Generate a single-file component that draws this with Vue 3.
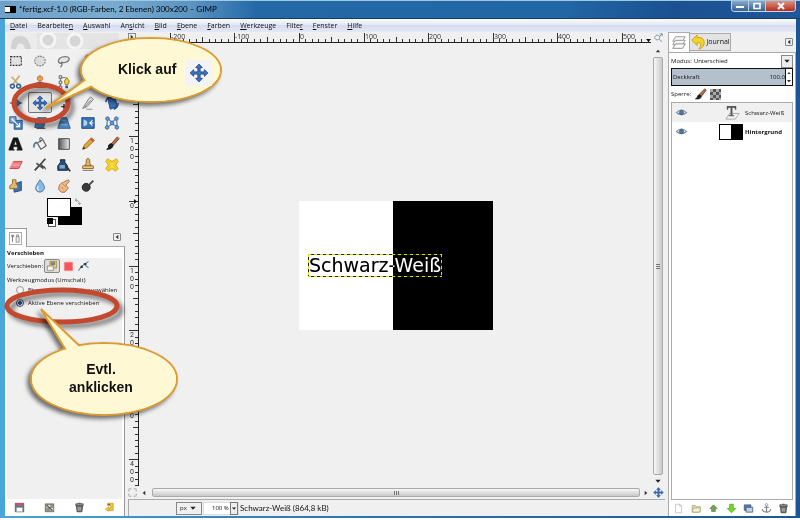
<script setup>
import { ref } from 'vue'

const menu = [
  ['', 'D', 'atei'], ['Bearbeite', 'n', ''], ['', 'A', 'uswahl'], ['An', 's', 'icht'],
  ['', 'B', 'ild'], ['', 'E', 'bene'], ['', 'F', 'arben'], ['', 'W', 'erkzeuge'],
  ['Filte', 'r', ''], ['', 'F', 'enster'], ['', 'H', 'ilfe'],
]

// Each shape is [path, fill, stroke, stroke width, dash]
const MOVE = 'M8 0L11 3.2H9V7H12.8V5L16 8L12.8 11V9H9V12.8H11L8 16L5 12.8H7V9H3.2V11L0 8L3.2 5V7H7V3.2H5Z'
const EYE = 'M1 8Q8 1 15 8Q8 14 1 8Z'
const icons = {
  rect: [['M2 3H14V13H2Z', '#e2e2e2', '#333', 1.3, '2 1.3']],
  ellipse: [['M8 2.5A6 5.5 0 1 1 7.9 2.5Z', '#dcdcdc', '#777', 1.2, '2 1.3']],
  lasso: [['M5 11C0 10 1 5 6 3.5C11 2 15 4 13.5 7C12 10 7 10.5 5 9Q7 12 4 15', '#e4e4e4', '#777', 1.4]],
  scissors: [['M5 10L12 1M10 10L3 2', 'none', '#caa76a', 1.8], ['M4 10.5A2.2 2.2 0 1 1 3.9 10.5ZM11 10.5A2.2 2.2 0 1 1 10.9 10.5Z', 'none', '#2c5f9e', 1.8]],
  foreground: [['M8 1A3 3 0 1 1 7.9 1Z', '#f0a04a', '#b8672a', 1], ['M2 14Q2 8 8 8Q14 8 14 14Z', '#e88a35', '#9b5220', 1], ['M5 8L8 12L11 8Z', '#3f72ad', 'none', 0]],
  paths: [['M4 2V14M4 3H10', 'none', '#777', 1], ['M2.5 1H5.5V4H2.5ZM2.5 7H5.5V10H2.5ZM2.5 12.5H5.5V15.5H2.5Z', '#eee', '#555', 1], ['M11 3L14 7L12.5 11H9.5L8.5 7Z', '#f4cf3d', '#94750f', 1], ['M9.5 12H12.5V15H9.5Z', '#2b5796', 'none', 0]],
  picker: [['M2 14L4 9L10 3L13 6L7 12Z', '#9fbcdb', '#3c6288', 1.2], ['M9 2L14 7', 'none', '#222', 3]],
  align: [['M8 3L13 8L8 13L3 8Z', '#4c7fb8', '#2a5286', 1], ['M1 8H4M12 8H15M8 1V4M8 12V15', 'none', '#2a5286', 1.4]],
  cross: [['M8 9V15M5 12H11', 'none', '#222', 1.5]],
  move: [[MOVE, '#3e73bd', '#1d478c', 0.8]],
  zoom: [['M7 1A5 5 0 1 1 6.9 1Z', '#dbe7f1', '#999', 1.4], ['M11 10L15 14', 'none', '#444', 2.4]],
  crop: [['M2 14L9 3L11 1L14 4L7 12Z', '#d9d9d9', '#777', 1], ['M3 14L11 5M6 15H13', 'none', '#888', 1]],
  rotate: [['M3 2L12 4L14 12L6 15Z', '#3a70b6', '#1b4279', 1], ['M1 7Q2 1 8 2M15 8Q15 13 10 15', 'none', '#22497e', 1.6]],
  scale: [['M6 5H15V15H6Z', '#4e86c2', '#204f89', 1], ['M1 1H8V8H1Z', '#87afd8', '#204f89', 1], ['M3 3L12 12M12 8V12H8', 'none', '#fff', 1.3]],
  shear: [['M5 2H15L12 13H2Z', '#4d84bf', '#285a93', 1], ['M4 14H14', 'none', '#555', 1.5]],
  perspective: [['M5 2H11L15 14H1Z', '#4f86c0', '#285a93', 1], ['M4 10H12M6 5H10', 'none', '#a5c3df', 1]],
  flip: [['M1 2H15V14H1Z', '#3975b7', '#174780', 1], ['M3 4L7 6V10L3 12Z', '#b6d4ee', 'none', 0], ['M13 5L10 8L13 11M10 8H14', 'none', '#fff', 1.2]],
  cage: [['M3 3L8 7L13 3L14 12L8 9L2 13Z', 'none', '#5682ae', 1.4], ['M3 1A2 2 0 1 1 2.9 1ZM13 1A2 2 0 1 1 12.9 1ZM8 6A2 2 0 1 1 7.9 6ZM2.5 11A2 2 0 1 1 2.4 11ZM13.5 11A2 2 0 1 1 13.4 11Z', '#6e9fce', '#2b5c94', 1]],
  text: [['M0 14L5 1H10L15 14V15H9V14H10L9.3 11H5.3L4.7 14H6V15H0ZM6 9H9L7.5 4Z', '#161616', '#161616', 0.5]],
  bucket: [['M5 7L11 3L15 10L9 14Z', '#f0f0f0', '#555', 1.2], ['M11 3Q10 0 8 1Q7 3 9 6', 'none', '#555', 1.1], ['M6 7Q1 5 1 12', 'none', '#54789b', 2]],
  gradient: [['M2 2H14V14H2Z', 'url(#toolGradient)', '#444', 1]],
  pencil: [['M2 14L4 9L12 1L15 4L7 12Z', '#e2a63a', '#9b5d15', 1], ['M2 14L3 11L5 13Z', '#222', 'none', 0], ['M11 2L14 5', 'none', '#d54d3d', 2]],
  brush: [['M7 8L14 0L16 2L9 10Z', '#bd7448', '#61351f', 1], ['M2 14Q5 13 4 10Q6 6 9 9Q9 14 2 14Z', '#222', '#111', 1]],
  eraser: [['M5 4H15L11 12H1Z', '#f47b80', '#b63f47', 1], ['M1 12L5 4M3 8H13', 'none', '#f9b5b8', 1]],
  airbrush: [['M2 14L8 8L14 1', 'none', '#444', 2], ['M4 6L12 12M8 7L11 9', 'none', '#555', 2], ['M10 10Q14 9 14 13', 'none', '#333', 1.2]],
  ink: [['M4 2H9V5L12 9V14H1V9L4 5Z', '#284d76', '#14283d', 1], ['M3 8H9V12H3Z', '#7ba8d2', 'none', 0], ['M10 9L15 15', 'none', '#333', 2]],
  clone: [['M6 2Q8 -1 10 2V6L12 9H4L6 6Z', '#ddb569', '#8d6628', 1], ['M2 9H14V12H2Z', '#e9ca83', '#8d6628', 1], ['M2 14H14', 'none', '#666', 1]],
  heal: [['M3 1L8 4L13 1L15 4L12 8L15 12L12 15L8 12L4 15L1 12L4 8L1 4Z', '#f3cf25', '#d4a70d', 1], ['M6 7H10M6 10H10', 'none', '#fff08b', 1]],
  perspectiveClone: [['M5 6L14 3V13L6 15Z', '#3b74b5', '#1d4a82', 1], ['M4 1H8V5L10 8V11H1V8L4 5Z', '#dfb86e', '#8e682d', 1]],
  blur: [['M8 1Q14 8 13 11Q11 15 8 15Q4 15 3 11Q3 8 8 1Z', '#8bb8e0', '#4377a6', 1], ['M6 8Q4 12 7 13', 'none', '#e1f2ff', 1.5]],
  smudge: [['M2 12Q2 5 7 4L13 1L14 3L10 7L13 10L9 15H5Z', '#f0bb8b', '#ad6a3f', 1], ['M7 6L10 9M5 9L8 12', 'none', '#c47c4c', 1]],
  dodge: [['M6 5A4.5 4.5 0 1 1 5.9 5Z', '#3a3a3a', '#222', 1], ['M9 7L14 2', 'none', '#444', 2]],
  save: [['M1 1H15V15H1Z', '#53779f', '#375272', 1], ['M3 1H13V5H3Z', '#dd5151', 'none', 0], ['M3 8H13V15H3Z', '#fff', '#999', 1]],
  restore: [['M1 2H15V15H1Z', '#9a937f', '#57584b', 1], ['M3 4H9V8H3ZM9 9H14V13H9Z', '#e6ebcf', 'none', 0], ['M3 4L13 13', 'none', '#495b75', 2]],
  trash: [['M3 5H13L12 15H4Z', '#777', '#333', 1.2], ['M2 2H14V5H2ZM6 1H10', '#aaa', '#333', 1.2], ['M6 7V13M9 7V13', 'none', '#ddd', 1]],
  reset: [['M5 1H14V13H5V9H10V5H5Z', '#f3c832', '#c88d11', 1], ['M7 7V14L1 11Z', '#f7d94a', '#c88d11', 1], ['M5 3H9', 'none', '#3b6ca6', 2]],
  tabTool: [['M3 2V14M2 2V5H5V2', 'none', '#777', 1.5], ['M9 5H14V14H9ZM10 5V2H13V5', '#eee', '#777', 1.2]],
  layerMove: [['M5 1H15V11H5Z', '#f2cd71', '#9b7330', 1], ['M1 8H10V15H1Z', '#f4f4f4', '#7f7155', 1], ['M7 3H12V6H7Z', '#7797b8', '#49607a', 1]],
  selection: [['M1 1H15V15H1Z', '#f45659', '#ff9999', 1]],
  pathMove: [['M1 14L5 8L15 1M8 4L15 10', 'none', '#567b9f', 1.4], ['M4 7H7V10H4ZM9 3H12V6H9Z', '#333', 'none', 0]],
  layers: [['M4 1H15L12 6H1Z', '#f7f7f7', '#888', 0.9], ['M4 5H15L12 10H1Z', '#f7f7f7', '#888', 0.9], ['M4 9H15L12 14H1Z', '#fafafa', '#777', 0.9]],
  journal: [['M1 6L7 0V3Q15 2 15 9Q15 14 9 16Q12 12 11 10Q10 8 7 9V12Z', '#f5d327', '#c99d12', 1]],
  lockBrush: [['M6 8L14 0L16 2L9 11Z', '#b66d48', '#51372b', 1], ['M1 14Q4 13 4 10Q7 6 9 11Q8 15 1 14Z', '#222', '#111', 1]],
  eye: [[EYE, '#fff', '#6d859a', 1.4], ['M8 5A3 3 0 1 1 7.9 5Z', '#53779a', '#34516e', 1]],
  textLayer: [['M6 9H16L12 15H2Z', '#f5f5f5', '#999', 0.8], ['M3 1H13V5H12L11 3H9V11H11V12H5V11H7V3H5L4 5H3Z', '#555', 'none', 0]],
  newLayer: [['M3 1H10L13 4V15H3Z', '#fff', '#aaa', 1], ['M10 1V4H13', '#ddd', '#aaa', 1]],
  folder: [['M1 3H6L8 5H14V14H1Z', '#ded9ae', '#9e9968', 1], ['M3 7H15L13 14H1Z', '#f2efd2', '#9e9968', 1]],
  up: [['M8 2L14 8H11V13H5V8H2Z', '#7aa05c', '#4c6f43', 1]],
  down: [['M8 15L15 8H11V1H5V8H1Z', '#72d927', '#3c9d15', 1]],
  duplicate: [['M1 2H12V11H1Z', '#5b7eaa', '#304d73', 1], ['M4 6H15V14H4Z', '#c0d0df', '#2e5077', 1.2]],
  anchor: [['M8 4V14M4 6H12M1 9Q2 14 8 14Q14 14 15 9', 'none', '#747d84', 1.8], ['M8 0A2 2 0 1 1 7.9 0Z', '#fff', '#747d84', 1.3]],
  swap: [['M3 3Q12 3 12 12M3 3L7 0M3 3L7 6M12 12L9 9M12 12L15 9', 'none', '#888', 1.5]],
  focus: [['M2 6V2H6M10 2H14V6M14 10V14H10M6 14H2V10', 'none', '#777', 1.3, '2 1']],
  zoomFit: [['M6 4A4 4 0 1 1 5.9 4ZM9 11L14 15M10 2H14V6M14 2L9 7', 'none', '#7a8792', 1.4]],
  left: [['M11 3V13L5 8Z', '#333', 'none', 0]],
  right: [['M5 3V13L11 8Z', '#333', 'none', 0]],
  arrowUp: [['M3 11H13L8 5Z', '#333', 'none', 0]],
  arrowDown: [['M2 5H14L8 12Z', '#222', 'none', 0]],
}

const tools = [
  ['rect', 'Rechteckige Auswahl'], ['ellipse', 'Elliptische Auswahl'], ['lasso', 'Freie Auswahl'], ['foreground', 'Zauberstab'], ['picker', 'Nach Farbe'],
  ['scissors', 'Magnetische Schere'], ['foreground', 'Vordergrundauswahl'], ['paths', 'Pfade'], ['picker', 'Farbpipette'], ['zoom', 'Vergrößerung'],
  ['align', 'Ausrichten'], ['move', 'Verschieben'], ['cross', 'Maßband'], ['crop', 'Zuschneiden'], ['rotate', 'Drehen'],
  ['scale', 'Skalieren'], ['shear', 'Scheren'], ['perspective', 'Perspektive'], ['flip', 'Spiegeln'], ['cage', 'Käfig'],
  ['text', 'Text'], ['bucket', 'Füllen'], ['gradient', 'Farbverlauf'], ['pencil', 'Stift'], ['brush', 'Pinsel'],
  ['eraser', 'Radierer'], ['airbrush', 'Sprühpistole'], ['ink', 'Tinte'], ['clone', 'Klonen'], ['heal', 'Heilen'],
  ['perspectiveClone', 'Perspektivisches Klonen'], ['blur', 'Weichzeichnen'], ['smudge', 'Verschmieren'], ['dodge', 'Abwedeln'],
]
const optionActions = [['save', 'Speichern'], ['restore', 'Wiederherstellen'], ['trash', 'Löschen'], ['reset', 'Zurücksetzen']]
const layerActions = [['newLayer', 'Neue Ebene'], ['folder', 'Neue Gruppe'], ['up', 'Anheben'], ['down', 'Absenken'], ['duplicate', 'Duplizieren'], ['anchor', 'Verankern'], ['trash', 'Löschen']]

const active = ref(11)
const mode = ref('active')
const opacity = ref('100.0')

// Ruler ticks: one per ten image pixels, drawn at 64.6 % scale
function ticks(origin, from, to) {
  const list = []
  for (let n = from; n <= to; n += 10) {
    list.push({ n, at: Math.round(origin + n * 0.646), size: n % 100 === 0 ? 9 : n % 50 === 0 ? 5 : 3 })
  }
  return list
}
const across = ticks(160, -240, 540)
const down = ticks(158, -190, 440)
</script>

<template>
  <div class="window">
    <svg class="defs" aria-hidden="true">
      <linearGradient id="toolGradient"><stop offset="0" stop-color="#555" /><stop offset="1" stop-color="#eee" /></linearGradient>
      <symbol v-for="(shapes, name) in icons" :id="'i-' + name" :key="name" viewBox="-1 -1 18 18">
        <path v-for="(s, i) in shapes" :key="i" :d="s[0]" :fill="s[1]" :stroke="s[2]" :stroke-width="s[3]" :stroke-dasharray="s[4]" />
      </symbol>
    </svg>

    <header class="titlebar">
      <span class="appicon"></span>
      <h1>*fertig.xcf-1.0 (RGB-Farben, 2 Ebenen) 300x200 – GIMP</h1>
      <div class="winbuttons">
        <button aria-label="Minimieren"><svg viewBox="0 0 12 10"><path d="M2 5H10V7H2Z" fill="#fff" /></svg></button>
        <button aria-label="Maximieren"><svg viewBox="0 0 12 10"><path d="M3 2.5H9V7.5H3Z" fill="none" stroke="#fff" stroke-width="1.6" /></svg></button>
        <button class="close" aria-label="Schließen"><svg viewBox="0 0 12 10"><path d="M3 2L9 8M9 2L3 8" stroke="#fff" stroke-width="2" /></svg></button>
      </div>
    </header>

    <nav class="menubar">
      <button v-for="m in menu" :key="m.join('')">{{ m[0] }}<u>{{ m[1] }}</u>{{ m[2] }}</button>
    </nav>

    <div class="body">
      <aside class="toolbox">
        <svg class="wilber" viewBox="0 0 110 16" aria-hidden="true">
          <path d="M0 0H110V16H0Z" fill="#e4e4e4" />
          <path d="M0 0H28V16H0Z" fill="#ececec" />
          <path d="M2 16Q2 3 11 3T22 16H16Q15 9 9 11L7 16Z" fill="#d2d2d2" />
          <circle cx="39" cy="7" r="7" fill="#d6d6d6" stroke="#f5f5f5" stroke-width="3" />
          <circle cx="66" cy="8" r="7" fill="#d6d6d6" stroke="#f5f5f5" stroke-width="3" />
        </svg>
        <div class="tools">
          <button v-for="(t, i) in tools" :key="i" :class="{ on: active === i }" :aria-label="t[1]" @click="active = i">
            <svg class="icon big"><use :href="'#i-' + t[0]" /></svg>
          </button>
        </div>
        <div class="colors">
          <div class="swatches"><i class="back"></i><i class="front"></i><i class="mini"></i></div>
          <svg class="icon swap"><use href="#i-swap" /></svg>
        </div>
        <div class="dockhead">
          <button class="tab" aria-label="Werkzeugeinstellungen"><svg class="icon"><use href="#i-tabTool" /></svg></button>
          <button class="fold" aria-label="Reiter konfigurieren"><svg class="icon tiny"><use href="#i-left" /></svg></button>
        </div>
        <section class="options">
          <h2>Verschieben</h2>
          <div class="optbody">
            <div class="target">
              <span>Verschieben:</span>
              <button class="pressed" aria-label="Ebene"><svg class="icon"><use href="#i-layerMove" /></svg></button>
              <button aria-label="Auswahl"><svg class="icon small"><use href="#i-selection" /></svg></button>
              <button aria-label="Pfad"><svg class="icon"><use href="#i-pathMove" /></svg></button>
            </div>
            <fieldset>
              <legend>Werkzeugmodus (Umschalt)</legend>
              <label><input v-model="mode" type="radio" value="pick" />Ebene oder Hilfslinie auswählen</label>
              <label><input v-model="mode" type="radio" value="active" />Aktive Ebene verschieben</label>
            </fieldset>
          </div>
          <div class="optactions">
            <button v-for="a in optionActions" :key="a[0]" :aria-label="a[1]"><svg class="icon small"><use :href="'#i-' + a[0]" /></svg></button>
          </div>
        </section>
      </aside>

      <main class="editor">
        <button class="corner" aria-label="Bildmenü"><svg class="icon tiny"><use href="#i-right" /></svg></button>
        <svg class="ruler hruler" aria-hidden="true">
          <g v-for="t in across" :key="t.n">
            <path :d="`M${t.at + 0.5} ${10 - t.size}V10`" />
            <text v-if="t.n % 100 === 0" :x="t.at + 1" y="7">{{ t.n }}</text>
          </g>
          <path class="pointer" d="M507 7H512L509.500 10Z" />
        </svg>
        <button class="fit" aria-label="Zoom anpassen"><svg class="icon small"><use href="#i-zoomFit" /></svg></button>

        <svg class="ruler vruler" aria-hidden="true">
          <g v-for="t in down" :key="t.n">
            <path :d="`M${10 - t.size} ${t.at + 0.5}H10`" />
            <template v-if="t.n % 100 === 0">
              <text v-for="(c, i) in String(Math.abs(t.n))" :key="i" x="2" :y="t.at + 7 + i * 8">{{ c }}</text>
            </template>
          </g>
          <path class="pointer" d="M6 156V161L9 158.500Z" />
        </svg>
        <div class="canvas">
          <div class="image">
            <div class="textlayer"><span>Schwarz-Weiß</span></div>
          </div>
        </div>
        <div class="scroll vertical">
          <svg class="icon tiny"><use href="#i-arrowUp" /></svg>
          <i class="thumb"></i>
          <svg class="icon tiny"><use href="#i-arrowDown" /></svg>
        </div>

        <svg class="icon small quick"><use href="#i-focus" /></svg>
        <div class="scroll horizontal">
          <svg class="icon tiny"><use href="#i-left" /></svg>
          <i class="thumb"></i>
          <svg class="icon tiny"><use href="#i-right" /></svg>
        </div>
        <button class="navigate" aria-label="Navigation"><svg class="icon small"><use href="#i-move" /></svg></button>

        <footer class="status">
          <div class="pick unit"><select aria-label="Einheit"><option>px</option></select><svg class="icon tiny"><use href="#i-arrowDown" /></svg></div>
          <div class="pick percent"><select aria-label="Zoom"><option>100 %</option></select><svg class="icon tiny"><use href="#i-arrowDown" /></svg></div>
          <span>Schwarz-Weiß (864,8 kB)</span>
        </footer>
      </main>

      <aside class="layers">
        <div class="layertabs">
          <button class="current" aria-label="Ebenen"><svg class="icon big"><use href="#i-layers" /></svg></button>
          <button class="journal"><svg class="icon big"><use href="#i-journal" /></svg>Journal</button>
          <button class="fold" aria-label="Reiter konfigurieren"><svg class="icon tiny"><use href="#i-left" /></svg></button>
        </div>
        <div class="panel">
          <div class="mode">
            <label for="mode">Modus:</label>
            <select id="mode"><option>Unterschied</option></select>
            <span class="drop"><svg class="icon tiny"><use href="#i-arrowDown" /></svg></span>
          </div>
          <div class="opacity">
            <label for="opacity">Deckkraft</label>
            <input id="opacity" v-model="opacity" type="text" />
            <span class="spin"><svg class="icon micro"><use href="#i-arrowUp" /></svg><svg class="icon micro"><use href="#i-arrowDown" /></svg></span>
          </div>
          <div class="locks">
            <span>Sperre:</span>
            <button aria-label="Pixel sperren"><svg class="icon"><use href="#i-lockBrush" /></svg></button>
            <button class="checker" aria-label="Alphakanal sperren"></button>
          </div>
          <ul>
            <li class="selected">
              <svg class="icon"><use href="#i-eye" /></svg>
              <svg class="icon thumbnail"><use href="#i-textLayer" /></svg>
              <span>Schwarz-Weiß</span>
            </li>
            <li>
              <svg class="icon"><use href="#i-eye" /></svg>
              <i class="bw"></i>
              <b>Hintergrund</b>
            </li>
          </ul>
          <div class="layeractions">
            <button v-for="a in layerActions" :key="a[0]" :aria-label="a[1]"><svg class="icon small"><use :href="'#i-' + a[0]" /></svg></button>
          </div>
        </div>
      </aside>
    </div>

    <div class="note first">
      <svg viewBox="0 0 240 110" aria-hidden="true">
        <ellipse class="ring" cx="41" cy="73" rx="27" ry="18" />
        <g class="bubble">
          <ellipse class="edge" cx="151" cy="40" rx="70" ry="32" />
          <path class="edge" d="M93 44L46 78L101 52Z" />
          <ellipse cx="151" cy="40" rx="69" ry="31" />
        </g>
      </svg>
      <p>Klick auf <span><svg class="icon"><use href="#i-move" /></svg></span></p>
    </div>
    <div class="note second">
      <svg viewBox="0 0 190 140" aria-hidden="true">
        <ellipse class="ring" cx="62" cy="24" rx="55" ry="16" />
        <g class="bubble">
          <ellipse class="edge" cx="104" cy="97" rx="73" ry="36" />
          <path class="edge" d="M70 75L41 27L87 71Z" />
          <ellipse cx="104" cy="97" rx="72" ry="35" />
        </g>
      </svg>
      <p>Evtl.<br />anklicken</p>
    </div>
  </div>
</template>

<style>
body { background: #fff; }
</style>

<style scoped>
* { box-sizing: border-box; }
.window {
  position: relative;
  display: flex;
  flex-direction: column;
  height: calc(100vh - 2px);
  min-height: 400px;
  padding: 0 4px 2px 5px;
  background: linear-gradient(90deg, #48a6d8, #2d78b6 40%, #1b5596);
  color: #111;
  font: 6px/10px "Open Sans", "Noto Sans", sans-serif;
  overflow: hidden;
}
.defs { position: absolute; width: 0; height: 0; }
button, select, input { margin: 0; padding: 0; border: 0; background: none; color: inherit; font: inherit; appearance: none; }
button { display: inline-flex; align-items: center; justify-content: center; }
h1, h2, p, ul, fieldset { margin: 0; padding: 0; border: 0; font-size: inherit; }
i { display: block; }
.icon { display: block; width: 13px; height: 13px; flex: none; }
.big { width: 16px; height: 16px; }
.small { width: 11px; height: 11px; }
.tiny { width: 8px; height: 8px; }
.micro { width: 6px; height: 6px; }

.titlebar {
  display: flex;
  align-items: center;
  flex: none;
  height: 19px;
  margin: 0 -4px 0 -5px;
  padding: 0 4px 1px 5px;
  border-top: 1px solid #9fc8e2;
  border-bottom: 1px solid #173c63;
  background: linear-gradient(90deg, #6fa0c8, #7aabd0 14%, #5b93c2 24%, #2469a6 32%, #2267a5 70%, #1b5190 84%, #1f579a);
}
.titlebar h1 { flex: 1; font: 8px/10px Lato, sans-serif; color: #000; }
.appicon { width: 11px; height: 7px; margin-right: 3px; border: 1px solid #000; border-width: 1px 0; background: linear-gradient(90deg, #fff 50%, #000 50%); }
.winbuttons { display: flex; align-self: flex-start; height: 11px; border: 1px solid #c6d7e8; border-top: 0; border-radius: 0 0 4px 4px; overflow: hidden; }
.winbuttons button { width: 17px; background: linear-gradient(#8ba9ca, #34608f); border-right: 1px solid #bccfe2; }
.winbuttons svg { width: 12px; height: 10px; }
.winbuttons .close { width: 29px; border: 0; background: linear-gradient(#dd9181, #b52d1c); }

.menubar { display: flex; flex: none; gap: 10px; height: 13px; padding-left: 5px; background: linear-gradient(#fafbfe, #e3e8f5 45%, #d6dcef 50%, #e4e8f6); font-size: 7px; }
.menubar u { text-underline-offset: 1px; }

.body { display: flex; flex: 1; min-height: 0; background: #f0f0f0; }

.toolbox { display: flex; flex-direction: column; width: 120px; flex: none; }
.wilber { width: 110px; height: 16px; margin: 1px 0 2px 4px; }
.tools { display: grid; grid-template-columns: repeat(5, 24px); grid-template-rows: repeat(7, 1fr); height: 145px; margin: 0 0 2px -1px; }
.tools button { border: 1px solid transparent; border-radius: 2px; }
.tools .on { border-color: #777; background: #e4e4e4; }
.colors { display: flex; gap: 0; padding-left: 42px; margin-bottom: 2px; }
.swatches { position: relative; width: 35px; height: 28px; }
.swatches i { position: absolute; border: 1px solid #000; }
.front { left: 0; top: 0; width: 24px; height: 19px; background: #fff; }
.back { right: 0; bottom: 1px; width: 24px; height: 18px; background: #000; }
.mini { left: 0; bottom: 2px; width: 6px; height: 6px; background: #000; box-shadow: 2px 2px 0 #fff, 2px 2px 0 1px #555; }
.swap { width: 9px; height: 9px; margin-left: -9px; }
.dockhead { display: flex; align-items: center; justify-content: space-between; height: 19px; padding-right: 4px; border-bottom: 1px solid #aaa; }
.tab { width: 22px; height: 20px; align-self: flex-start; background: #fff; border: 1px solid #999; border-bottom: 0; border-left: 0; }
.tab .icon { border: 1px solid #aaa; }
.fold { width: 8px; height: 8px; border: 1px solid #888; border-radius: 1px; }
.options { display: flex; flex-direction: column; flex: 1; background: #fff; border-right: 1px solid #999; }
.options h2 { height: 11px; padding-left: 2px; line-height: 12px; }
.optbody { flex: 1; margin: 0 2px; background: #f0f0f0; }
.target { display: flex; align-items: center; height: 16px; gap: 1px; }
.target button { width: 14px; height: 14px; }
.target .pressed { width: 16px; border: 1px solid #888; border-radius: 2px; background: #ddd; }
.target .pressed .icon { width: 12px; height: 12px; }
fieldset { display: flex; flex-direction: column; gap: 3px; min-width: 0; }
legend { height: 11px; padding: 0; line-height: 12px; }
label { display: flex; align-items: center; }
fieldset label { padding-left: 9px; gap: 4px; white-space: nowrap; }
fieldset input { width: 8px; height: 8px; border: 1px solid #999; border-radius: 50%; background: #f5f5f5; }
fieldset input:checked { border-color: #557; background: radial-gradient(#1e5c93 40%, #d8ecfa 50%); }
.optactions { display: flex; align-items: center; justify-content: space-around; height: 17px; }

.editor {
  display: grid;
  flex: 1;
  min-width: 0;
  grid-template-columns: 14px minmax(0, 1fr) 14px;
  grid-template-rows: 11px minmax(0, 1fr) 13px 17px;
  padding-right: 2px;
}
.corner { justify-self: center; width: 8px; height: 8px; margin-top: 1px; border: 1px solid #888; }
.ruler { display: block; overflow: hidden; }
.ruler path { stroke: #333; fill: none; }
.ruler .pointer { fill: #111; stroke: none; }
.hruler text { font-size: 7px; fill: #333; }
.vruler text { font: 7px Roboto, sans-serif; fill: #333; }
.hruler { width: 100%; height: 11px; border-bottom: 1px solid #222; }
.vruler { width: 11px; height: 100%; justify-self: end; border-right: 1px solid #222; }
.canvas { display: grid; place-items: center; padding: 2px 0 0 2px; }
.image { display: flex; align-items: center; width: 194px; height: 129px; background: linear-gradient(90deg, #fff 94px, #000 94px); }
.textlayer {
  margin-left: 9px;
  padding: 1px;
  background:
    repeating-linear-gradient(90deg, #dd0 0 3px, #222 3px 6px) top / 100% 1px no-repeat,
    repeating-linear-gradient(90deg, #dd0 0 3px, #222 3px 6px) bottom / 100% 1px no-repeat,
    repeating-linear-gradient(#dd0 0 3px, #222 3px 6px) left / 1px 100% no-repeat,
    repeating-linear-gradient(#dd0 0 3px, #222 3px 6px) right / 1px 100% no-repeat;
}
.textlayer span { display: block; font: 19px/21px "DejaVu Sans", sans-serif; color: #fff; mix-blend-mode: difference; }
.scroll { display: flex; align-items: center; justify-content: space-between; }
.vertical { flex-direction: column; padding: 4px 0 1px; }
.thumb { flex: 1; border: 1px solid #aaa; border-radius: 2px; }
.vertical .thumb { width: 10px; margin: 2px 0; background: repeating-linear-gradient(#777 0 1px, transparent 1px 2px) center / 4px 5px no-repeat, linear-gradient(90deg, #f8f8f8, #e0e0e0 50%, #c9c9c9); }
.horizontal { padding: 0 1px; }
.horizontal .thumb { height: 9px; margin: 0 2px 0 4px; background: repeating-linear-gradient(90deg, #777 0 1px, transparent 1px 2px) center / 5px 4px no-repeat, linear-gradient(#f8f8f8, #e0e0e0 50%, #c9c9c9); }
.quick, .navigate { place-self: center; }
.status { grid-column: 1 / -1; display: flex; align-items: center; margin-left: 3px; padding-left: 47px; border-top: 1px solid #aaa; border-left: 1px solid #aaa; gap: 1px; white-space: nowrap; }
.status > span { font: 8px/10px Lato, sans-serif; }
.pick { display: flex; align-items: center; height: 13px; border: 1px solid #888; }
.pick select { flex: 1; min-width: 0; padding-left: 3px; }
.unit { width: 26px; }
.unit select { flex: none; width: 12px; }
.percent { width: 36px; background: #fff; border-color: #ddd; }
.percent select { padding-left: 8px; }
.percent .icon { height: 13px; border: 1px solid #777; background: #eee; }

.layers { display: flex; flex-direction: column; width: 129px; flex: none; padding-left: 1px; }
.layertabs { display: flex; align-items: center; height: 20px; padding-right: 3px; }
.layertabs .current { width: 22px; height: 20px; background: #fff; border: 1px solid #aaa; border-bottom: 0; }
.journal { height: 18px; width: 41px; gap: 0; border: 1px solid #aaa; border-left: 0; background: #e3e3e3; font-size: 7px; }
.layertabs .fold { margin-left: auto; }
.panel { display: flex; flex-direction: column; flex: 1; padding: 1px 2px 0 2px; border: 1px solid #aaa; border-width: 1px 1px 0; background: #fff; }
.mode { display: flex; align-items: center; height: 14px; gap: 2px; }
.mode select { flex: 1; min-width: 0; }
.drop { display: flex; align-items: center; justify-content: center; width: 12px; height: 13px; border: 1px solid #888; background: #eee; }
.opacity { display: flex; align-items: center; height: 18px; border: 1px solid #111; background: #b4c1cd; }
.opacity label { flex: 1; padding-left: 1px; }
.opacity input { width: 24px; text-align: right; }
.spin { display: flex; flex-direction: column; justify-content: space-around; height: 100%; border-left: 1px solid #111; background: #fff; }
.locks { display: flex; align-items: center; height: 16px; gap: 3px; }
.checker { width: 11px; height: 11px; background: conic-gradient(#555 25%, #aaa 0 50%, #555 0 75%, #aaa 0) 0 0 / 6px 6px; }
ul { flex: 1; list-style: none; border: 1px solid #aaa; }
li { display: grid; grid-template-columns: 42px 24px 1fr; align-items: center; height: 19px; padding-left: 3px; column-gap: 2px; white-space: nowrap; }
.selected { background: #f0f0f0; }
.thumbnail { width: 17px; height: 17px; justify-self: center; }
.bw { width: 24px; height: 16px; border: 1px solid #000; background: linear-gradient(90deg, #fff 50%, #000 50%); }
.layeractions { display: flex; align-items: center; justify-content: space-between; height: 16px; padding: 0 4px 0 2px; }

.note { position: absolute; pointer-events: none; }
.note > svg { display: block; width: 100%; overflow: visible; }
.note p { position: absolute; color: #111; font: bold 14px/18px "Liberation Sans", Arial, sans-serif; text-align: center; white-space: nowrap; }
.first { left: 0; top: 30px; width: 240px; }
.first p { left: 118px; top: 30px; display: flex; gap: 10px; }
.first p span { display: grid; place-items: center; width: 26px; height: 26px; background: #f3f3f6; }
.first p .icon { width: 20px; height: 20px; }
.second { left: 0; top: 282px; width: 190px; }
.second p { left: 28px; top: 78px; width: 146px; }
.ring { fill: none; stroke: #c4482d; stroke-width: 5; filter: drop-shadow(4px 4px 2px #0007); }
.bubble { fill: #fff8d5; filter: drop-shadow(-3px 3px 2px #0008); }
.edge { stroke: #dc9c31; stroke-width: 2; }
</style>
